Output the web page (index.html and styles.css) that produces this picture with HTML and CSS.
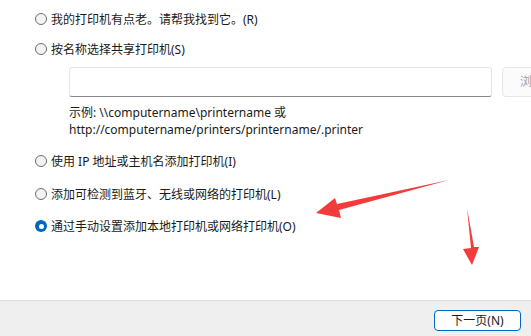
FILE: index.html
```html
<!DOCTYPE html>
<html lang="zh-CN">
<head>
<meta charset="utf-8">
<title>添加打印机</title>
<link rel="stylesheet" href="styles.css">
</head>
<body>
<div class="page">
  <div class="main">
    <label class="opt opt-first"><span class="radio"></span><span>我的打印机有点老。请帮我找到它。(R)</span></label>
    <label class="opt opt-second"><span class="radio"></span><span>按名称选择共享打印机(S)</span></label>
    <div class="sub">
      <div class="field-row">
        <div class="field"></div>
        <div class="browse">浏览(R)...</div>
      </div>
      <div class="example">
        <div>示例: \\computername\printername 或</div>
        <div>http://computername/printers/printername/.printer</div>
      </div>
    </div>
    <label class="opt opt-third"><span class="radio"></span><span>使用 IP 地址或主机名添加打印机(I)</span></label>
    <label class="opt opt-fourth"><span class="radio"></span><span>添加可检测到蓝牙、无线或网络的打印机(L)</span></label>
    <label class="opt opt-fifth"><span class="radio checked"></span><span>通过手动设置添加本地打印机或网络打印机(O)</span></label>
  </div>
  <div class="footer">
    <button class="next">下一页(N)</button>
  </div>
  <svg class="arrows" width="531" height="336" viewBox="0 0 531 336">
    <polygon points="316,213 335,198 337,204 449,180 339,210 341,218" fill="#f33b3b"/>
    <polygon points="467,208 471,248 463,249 472,265 479,247 474,247" fill="#f33b3b"/>
  </svg>
</div>
</body>
</html>
```
FILE: styles.css
```css
* { box-sizing: border-box; }
html, body { margin: 0; padding: 0; }
body {
  width: 531px;
  height: 336px;
  overflow: hidden;
  background: #ffffff;
  font-family: "Noto Sans", "Noto Sans CJK SC", sans-serif;
  font-size: 12px;
  color: #1a1a1a;
}
.page {
  position: relative;
  width: 531px;
  height: 336px;
  display: flex;
  flex-direction: column;
}
.main {
  height: 300px;
  padding: 10px 0 0 34px;
  display: flex;
  flex-direction: column;
}
.opt {
  display: flex;
  align-items: center;
  height: 18px;
  gap: 4px;
  white-space: nowrap;
}
.opt-second { margin-top: 12px; }
.opt-third { margin-top: 14px; }
.opt-fourth { margin-top: 15px; }
.opt-fifth { margin-top: 14px; }
.radio {
  width: 12px;
  height: 12px;
  border-radius: 50%;
  border: 1px solid #6e6e6e;
  background: #f3f3f3;
  flex: none;
  margin-left: 1px;
}
.radio.checked {
  border: none;
  background: #0067c0;
  display: flex;
  align-items: center;
  justify-content: center;
}
.radio.checked::after {
  content: "";
  width: 5px;
  height: 5px;
  border-radius: 50%;
  background: #ffffff;
}
.sub {
  margin: 9px 0 0 35px;
}
.field-row {
  display: flex;
  gap: 10px;
}
.field {
  width: 423px;
  height: 30px;
  flex: none;
  border: 1px solid #e5e5e5;
  border-bottom: 1px solid #868686;
  border-radius: 3px;
  background: #ffffff;
}
.browse {
  width: 80px;
  height: 30px;
  flex: none;
  border: 1px solid #e8e8e8;
  border-radius: 4px;
  background: #fbfbfb;
  color: #a0a0a0;
  padding-left: 17px;
  line-height: 28px;
  white-space: nowrap;
}
.example {
  margin-top: 7px;
  line-height: 17px;
  white-space: nowrap;
}
.footer {
  height: 36px;
  background: #efefef;
  border-top: 1px solid #dcdcdc;
  display: flex;
  justify-content: flex-end;
  align-items: flex-start;
  padding: 9px 10px 0 0;
}
.next {
  width: 87px;
  height: 21px;
  border: 1px solid #0067c0;
  border-radius: 4px;
  background: #ffffff;
  font-family: "Noto Sans", "Noto Sans CJK SC", sans-serif;
  font-size: 12px;
  color: #1a1a1a;
  padding: 0;
  line-height: 19px;
}
.arrows {
  position: absolute;
  left: 0;
  top: 0;
  pointer-events: none;
}
```
